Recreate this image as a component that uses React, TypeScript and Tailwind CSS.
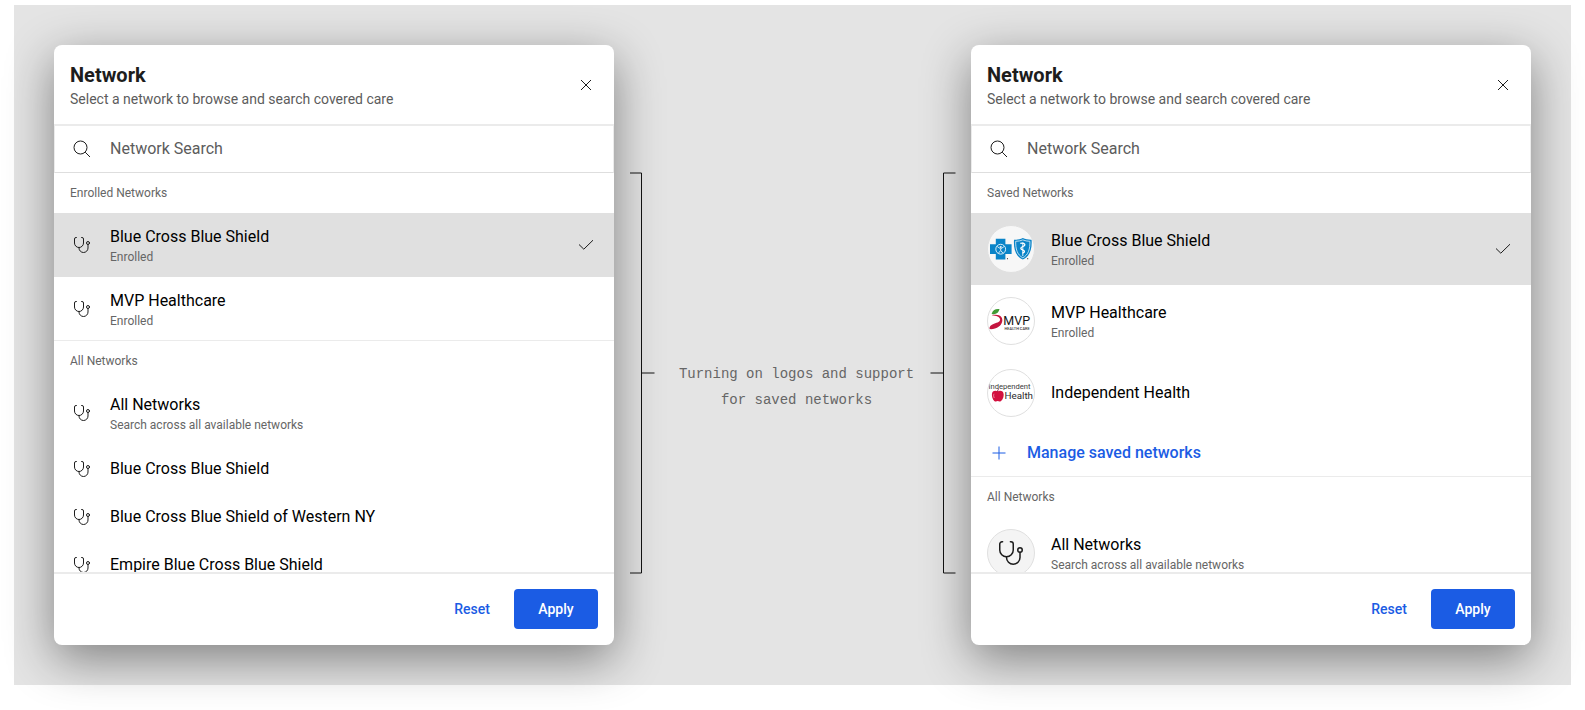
import React from "react";

type LogoKind = "bcbs" | "mvp" | "independent" | "stethoscope";

interface NetworkItem {
  name: string;
  detail?: string;
  logo?: LogoKind;
  selected?: boolean;
}

interface NetworkGroup {
  title: string;
  items: NetworkItem[];
  manageLabel?: string;
}

const enrolledGroups: NetworkGroup[] = [
  {
    title: "Enrolled Networks",
    items: [
      { name: "Blue Cross Blue Shield", detail: "Enrolled", selected: true },
      { name: "MVP Healthcare", detail: "Enrolled" },
    ],
  },
  {
    title: "All Networks",
    items: [
      { name: "All Networks", detail: "Search across all available networks" },
      { name: "Blue Cross Blue Shield" },
      { name: "Blue Cross Blue Shield of Western NY" },
      { name: "Empire Blue Cross Blue Shield" },
    ],
  },
];

const savedGroups: NetworkGroup[] = [
  {
    title: "Saved Networks",
    items: [
      { name: "Blue Cross Blue Shield", detail: "Enrolled", logo: "bcbs", selected: true },
      { name: "MVP Healthcare", detail: "Enrolled", logo: "mvp" },
      { name: "Independent Health", logo: "independent" },
    ],
    manageLabel: "Manage saved networks",
  },
  {
    title: "All Networks",
    items: [
      {
        name: "All Networks",
        detail: "Search across all available networks",
        logo: "stethoscope",
      },
    ],
  },
];

function Stethoscope({ className }: { className: string }) {
  return (
    <svg
      viewBox="0 0 24 24"
      className={className}
      fill="none"
      stroke="currentColor"
      strokeWidth="1.5"
      strokeLinecap="round"
      aria-hidden="true"
    >
      <path d="M3.6.75H3A2.25 2.25 0 0 0 .75 3v6a6.75 6.75 0 0 0 13.5 0V3A2.25 2.25 0 0 0 12 .75h-.6" />
      <path d="M7.5 15.75v.75a6.75 6.75 0 0 0 13.5 0v-5.25" />
      <circle cx="21" cy="9" r="2.25" />
    </svg>
  );
}

function SearchIcon() {
  return (
    <svg viewBox="0 0 24 24" className="size-6 shrink-0 text-[#1d1d1d]" fill="none" stroke="currentColor" aria-hidden="true">
      <circle cx="10.5" cy="10.5" r="6.5" />
      <path d="M15.2 15.2L20 20" />
    </svg>
  );
}

function CloseIcon() {
  return (
    <svg viewBox="0 0 24 24" className="size-6" fill="none" stroke="currentColor" strokeWidth="1" aria-hidden="true">
      <path d="M7 7l10 10M17 7L7 17" />
    </svg>
  );
}

function CheckIcon() {
  return (
    <svg viewBox="0 0 24 24" className="size-6 shrink-0 text-[#1d1d1d]" fill="none" stroke="currentColor" strokeWidth="1" aria-hidden="true">
      <path d="M5 11.5l4.8 4.7L19 7.2" />
    </svg>
  );
}

function PlusIcon() {
  return (
    <svg viewBox="0 0 24 24" className="size-6 shrink-0" fill="none" stroke="currentColor" aria-hidden="true">
      <path d="M12 5.5v13M5.5 12h13" />
    </svg>
  );
}

function BcbsLogo() {
  return (
    <svg viewBox="1 1 46 46" className="size-full" aria-hidden="true">
      <path fill="#0a84c8" d="M8.8 13.7h9.6v5.6h6.2v9.8h-6.2v5.5H8.8v-5.5H3v-9.8h5.8z" />
      <circle cx="13.7" cy="24.200" r="4.900" fill="#0a84c8" stroke="#d9edf8" strokeWidth="1" />
      <circle cx="13.7" cy="22" r="1.1" fill="#e6f3fa" />
      <path d="M10.2 21.500l3.5 2.400 3.5-2.400M13.7 23.500v2l-2.400 2.800M13.7 25.500l2.400 2.800" fill="none" stroke="#e6f3fa" strokeWidth="0.9" />
      <path
        fill="#0a84c8"
        d="M27 14.700c3.200.1 6-.4 8.800-1.700 2.800 1.300 5.600 1.800 8.800 1.700.6 9.300-1.500 16.500-8.800 19.900C28.500 31.200 26.400 24 27 14.700z"
      />
      <path
        fill="none"
        stroke="#e6f3fa"
        strokeWidth="0.8"
        d="M28.700 16.300c2.600 0 4.900-.5 7.100-1.400 2.200.9 4.500 1.400 7.100 1.400.2 7.500-1.400 13.500-7.100 16.500-5.700-3-7.300-9-7.100-16.500z"
      />
      <path d="M35.800 17.500v13.500" stroke="#fff" strokeWidth="0.9" />
      <path
        d="M33.300 18.400c4.500-.8 6.200 1.700 2.500 3.100-3 1.200-2.400 2.700.2 3.600 2.400.9 1.600 2.400-.5 3"
        fill="none"
        stroke="#fff"
        strokeWidth="1.3"
      />
      <circle cx="20.5" cy="33.700" r="0.6" fill="#444" />
      <circle cx="40.7" cy="33.700" r="0.6" fill="#444" />
    </svg>
  );
}

function MvpLogo() {
  return (
    <svg viewBox="1 1 46 46" className="size-full" aria-hidden="true">
      <path fill="#3f9b35" d="M4.600 17c1-3.700 3.600-5.400 7.900-4.900-.6 3.700-3.300 5.700-7.900 4.900z" />
      <path
        fill="#c4153f"
        d="M4.600 18.200c4.200-.9 8-.6 9.900 2 2 3 .3 7.200-2.600 9.400-3 2.300-6.700 2.900-9.700 2.500.3-2.700 1.600-4.400 4.800-5.400 3.600-1.100 6.400-2 6.100-4.400-.3-2.500-3.700-3.600-8.500-4.100z"
      />
      <text x="16.300" y="28" fontFamily="Roboto, sans-serif" fontSize="12.5" fill="#161616">
        MVP
      </text>
      <text x="17.600" y="32.700" fontFamily="Roboto, sans-serif" fontSize="3.9" fontWeight="500" fill="#333">
        HEALTH CARE
      </text>
    </svg>
  );
}

function IndependentLogo() {
  return (
    <svg viewBox="1 1 46 46" className="size-full" aria-hidden="true">
      <text x="1.500" y="20.300" fontFamily="Roboto, sans-serif" fontSize="7.600" fill="#3a3a3a">
        Independent
      </text>
      <path
        fill="#d3103f"
        d="M10.700 22.600c1.900-1.500 5.900-1 6 2.800.1 3.700-2.100 7.100-4.100 7.100-.8 0-1.200-.4-1.900-.4s-1.100.4-1.900.4c-2 0-3.900-3.400-3.900-7.100 0-3.700 3.900-4.300 5.800-2.800z"
      />
      <path d="M10.600 22.900c0-1.400.3-2.300 1.200-3" fill="none" stroke="#8f1230" strokeWidth="0.9" />
      <path d="M7 24.800c-.6 1.200-.5 2.800.3 4.200" fill="none" stroke="#f2a3b5" strokeWidth="0.8" />
      <text x="17.500" y="29.500" fontFamily="Roboto, sans-serif" fontSize="9.800" fill="#2b2b2b">
        Health
      </text>
    </svg>
  );
}

function LogoBadge({ kind }: { kind: LogoKind }) {
  if (kind === "stethoscope") {
    return (
      <span className="flex size-12 shrink-0 items-center justify-center rounded-full border border-[#e0e0e0] bg-[#f4f4f4] text-[#1d1d1d]">
        <Stethoscope className="size-6" />
      </span>
    );
  }
  return (
    <span
      className={
        kind === "bcbs"
          ? "block size-12 shrink-0 overflow-hidden rounded-full border border-[#e0e0e0] bg-[#f7f7f7]"
          : "block size-12 shrink-0 overflow-hidden rounded-full border border-[#e0e0e0] bg-white"
      }
    >
      {kind === "bcbs" && <BcbsLogo />}
      {kind === "mvp" && <MvpLogo />}
      {kind === "independent" && <IndependentLogo />}
    </span>
  );
}

function NetworkRow({ item }: { item: NetworkItem }) {
  return (
    <li>
      <button
        type="button"
        aria-pressed={!!item.selected}
        className={
          item.selected
            ? "flex w-full items-center gap-4 bg-[#e0e0e0] px-4 py-3 text-left"
            : "flex w-full items-center gap-4 px-4 py-3 text-left"
        }
      >
        {item.logo ? (
          <LogoBadge kind={item.logo} />
        ) : (
          <span className="flex size-6 shrink-0 items-center justify-center text-[#1d1d1d]">
            <Stethoscope className="size-4" />
          </span>
        )}
        <span className="flex min-w-0 grow flex-col">
          <span className="text-base leading-6 text-black">{item.name}</span>
          {item.detail && <span className="text-xs leading-4 text-[#666666]">{item.detail}</span>}
        </span>
        {item.selected && <CheckIcon />}
      </button>
    </li>
  );
}

function NetworkDialog({ id, groups }: { id: string; groups: NetworkGroup[] }) {
  return (
    <section
      role="dialog"
      aria-labelledby={`${id}-title`}
      className="flex min-w-0 flex-1 flex-col overflow-hidden rounded-lg bg-white shadow-[0_14px_48px_rgba(0,0,0,0.44)]"
    >
      <header className="flex items-center justify-between border-b border-[#ebebeb] px-4 pt-4 pb-[15px]">
        <div>
          <h2 id={`${id}-title`} className="text-xl leading-7 font-bold text-[#1d1d1d]">
            Network
          </h2>
          <p className="text-sm leading-5 text-[#5c5c5c]">Select a network to browse and search covered care</p>
        </div>
        <button type="button" aria-label="Close" className="text-[#1d1d1d]">
          <CloseIcon />
        </button>
      </header>

      <label className="flex h-12 items-center gap-4 border border-[#ebebeb] border-b-[#dedede] px-[15px]">
        <SearchIcon />
        <input
          type="text"
          aria-label="Network Search"
          placeholder="Network Search"
          className="min-w-0 grow bg-transparent text-base leading-6 text-black outline-none placeholder:text-[#5c5c5c]"
        />
      </label>

      <div className="h-[399px] overflow-y-auto [scrollbar-width:none]">
        {groups.map((group) => (
          <div
            key={group.title}
            className="relative not-last:after:absolute not-last:after:inset-x-0 not-last:after:bottom-0 not-last:after:h-px not-last:after:bg-[#ebebeb]"
          >
            <h3 className="px-4 py-3 text-xs leading-4 text-[#666666]">{group.title}</h3>
            <ul>
              {group.items.map((item) => (
                <NetworkRow key={item.name} item={item} />
              ))}
            </ul>
            {group.manageLabel && (
              <button type="button" className="flex w-full items-center gap-4 px-4 py-3 text-left text-base leading-6 font-medium text-[#1b5ce4]">
                <PlusIcon />
                {group.manageLabel}
              </button>
            )}
          </div>
        ))}
      </div>

      <footer className="flex justify-end border-t-2 border-[#ebebeb] px-4 pt-[15px] pb-4 text-sm leading-5 font-medium">
        <button type="button" className="h-10 min-w-[84px] px-6 text-[#1b5ce4]">
          Reset
        </button>
        <button type="button" className="h-10 min-w-[84px] rounded bg-[#1b5ce4] px-6 text-white">
          Apply
        </button>
      </footer>
    </section>
  );
}

function Bracket({ side }: { side: "left" | "right" }) {
  return (
    <svg viewBox="0 0 26 402" className="h-[402px] w-[26px] shrink-0" fill="none" stroke="#111111" aria-hidden="true">
      {side === "left" ? (
        <path d="M1 1H12.5V401H1M12.5 201H25.5" />
      ) : (
        <path d="M25.5 1H13.5V401H25.5M13.5 201H.5" />
      )}
    </svg>
  );
}

export default function App() {
  return (
    <main className="px-[14px] pt-[5px] pb-[25px] font-['Roboto',sans-serif]">
      <div className="flex bg-[#e4e4e4] p-10">
        <NetworkDialog id="enrolled" groups={enrolledGroups} />
        <div className="relative flex w-[357px] shrink-0 items-center px-[15px] pt-[127px] pb-[71px]">
          <Bracket side="left" />
          <p className="grow pt-7 pl-2 text-center font-['Liberation_Mono',monospace] text-sm leading-[26px] text-[#666666]">
            Turning on logos and support
            <br />
            for saved networks
          </p>
          <Bracket side="right" />
        </div>
        <NetworkDialog id="saved" groups={savedGroups} />
      </div>
    </main>
  );
}
